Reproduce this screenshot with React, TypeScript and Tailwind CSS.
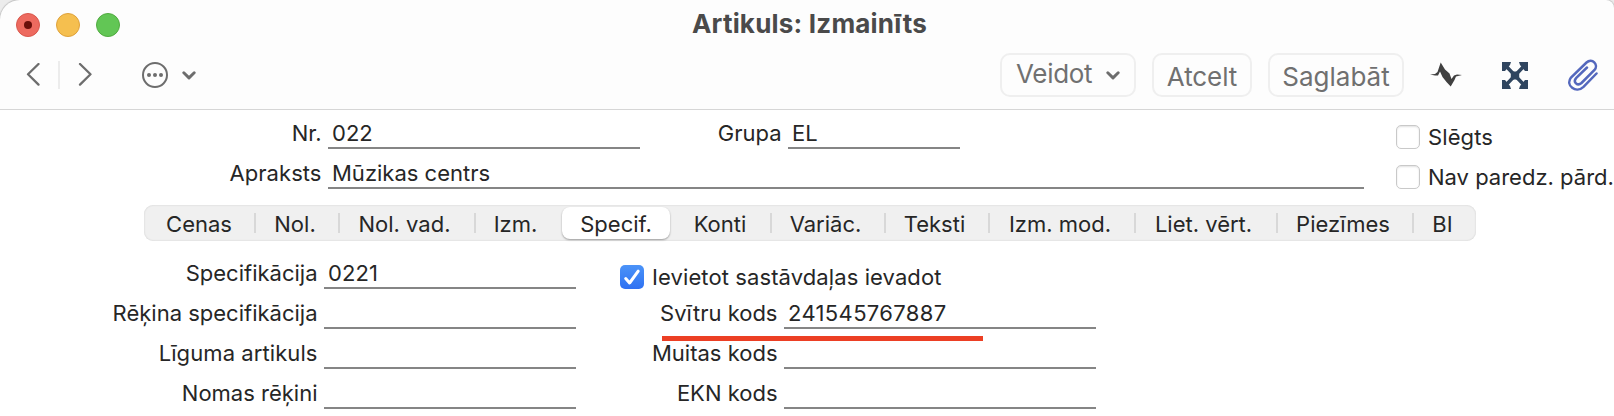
import { clsx } from 'clsx';

interface FieldProps {
  label: string;
  value?: string;
  labelClass: string;
  fieldClass: string;
  textClass?: string;
  valueClass?: string;
}

function Field({ label, value, labelClass, fieldClass, textClass, valueClass }: FieldProps) {
  return (
    <div className="flex h-10 items-end">
      <div className={clsx('shrink-0 whitespace-nowrap pr-[0.5px] pb-0.5 text-right leading-7', labelClass)}>
        <span className={textClass}>{label}</span>
      </div>
      <div className={clsx('ml-1.5 h-[30px] shrink-0 whitespace-nowrap border-b-2 border-[#858585] pl-1 leading-7', fieldClass)}>
        <span className={valueClass}>{value}</span>
      </div>
    </div>
  );
}

function Checkbox({ label, checked, textClass }: { label: string; checked?: boolean; textClass?: string }) {
  return (
    <div className="flex h-6 items-center whitespace-nowrap">
      {checked ? (
        <span className="flex size-6 shrink-0 items-center justify-center rounded-[5px] bg-linear-to-b from-[#4b93f8] to-[#2f71f2]">
          <svg viewBox="0 0 24 24" className="size-6" fill="none" stroke="white" strokeWidth="3" strokeLinecap="round" strokeLinejoin="round">
            <path d="M5.7 13.6 L9.6 18 L18.2 6.2" />
          </svg>
        </span>
      ) : (
        <span className="size-6 shrink-0 rounded-[5px] border border-[#c9c9c9] bg-white shadow-[inset_0_1px_2px_rgba(0,0,0,0.12)]" />
      )}
      <span className={clsx('ml-2 leading-7', textClass)}>{label}</span>
    </div>
  );
}

const tabs = [
  { name: 'Cenas', cell: 'w-[112px]' },
  { name: 'Nol.', cell: 'w-[84px] pr-[4px]' },
  { name: 'Nol. vad.', cell: 'w-[136px] pr-[5px]' },
  { name: 'Izm.', cell: 'w-[86px] pr-[7px]', last: true },
  { name: 'Specif.', cell: 'w-[108px]', active: true },
  { name: 'Konti', cell: 'w-[102px]' },
  { name: 'Variāc.', cell: 'w-[114px] pr-[5px]' },
  { name: 'Teksti', cell: 'w-[104px] pr-[5px]' },
  { name: 'Izm. mod.', cell: 'w-[146px] pr-[4px]' },
  { name: 'Liet. vērt.', cell: 'w-[142px] pr-[5px]' },
  { name: 'Piezīmes', cell: 'w-[136px] pr-[4px]' },
  { name: 'BI', cell: 'w-[62px] pr-[5px]', last: true },
];

function Tabs() {
  return (
    <div className="mt-4 ml-36 flex h-9 w-[1332px] items-center rounded-[9px] bg-[#f0f0f0] shadow-[inset_0_0_2px_rgba(0,0,0,0.16)]">
      {tabs.map((tab) => (
        <div
          key={tab.name}
          className={clsx(
            'flex shrink-0 items-center whitespace-nowrap',
            tab.cell,
            tab.active ? 'h-8 rounded-lg bg-white shadow-[0_1px_2px_rgba(0,0,0,0.35)]' : 'h-5',
            !tab.active && !tab.last && 'border-r-2 border-[#d8d8d8]',
          )}
        >
          <span className="mt-0.5 flex-1 text-center leading-7">{tab.name}</span>
        </div>
      ))}
    </div>
  );
}

function SmallChevron() {
  return (
    <svg width="14" height="9" viewBox="0 0 14 9" fill="none" stroke="#6d6d6d" strokeWidth="2.9" strokeLinecap="round" strokeLinejoin="round">
      <path d="M1.8 1.7 L7 6.9 L12.2 1.7" />
    </svg>
  );
}

const buttonClass = 'flex h-11 shrink-0 items-center whitespace-nowrap rounded-[10px] border-2 border-[#efefef] text-[26px] leading-8 text-[#707070]';

function Header() {
  return (
    <header className="h-[110px] rounded-tl-[20px] rounded-tr-[8px] border-b border-[#d6d6d6] bg-[#fdfdfd] shadow-[0_0_1px_1px_#c4c4c4]">
      <div className="flex h-[50px] items-center pl-4">
        <div className="flex w-[676px] gap-4">
          <span className="flex size-6 items-center justify-center rounded-full border border-[#d9574c] bg-[#ed6a5f]">
            <span className="size-2 rounded-full bg-[#6b0f0a]" />
          </span>
          <span className="size-6 rounded-full border border-[#dfa23b] bg-[#f5bf4f]" />
          <span className="size-6 rounded-full border border-[#51ab40] bg-[#62c655]" />
        </div>
        <h1 className="-mt-0.5 whitespace-nowrap text-[26px] font-bold leading-8 tracking-[0.2px] text-[#4a4a4a]">Artikuls: Izmainīts</h1>
      </div>
      <div className="flex h-[50px] items-center pl-[26px]">
        <svg width="14" height="24" viewBox="0 0 14 24" fill="none" stroke="#6d6d6d" strokeWidth="2.3" strokeLinecap="round" strokeLinejoin="round">
          <path d="M12.5 1 L2 11.3 L12.5 21.6" />
        </svg>
        <span className="ml-[18px] h-7 w-0.5 bg-[#ececec]" />
        <svg className="ml-[18px]" width="14" height="24" viewBox="0 0 14 24" fill="none" stroke="#6d6d6d" strokeWidth="2.3" strokeLinecap="round" strokeLinejoin="round">
          <path d="M2 1 L12.5 11.3 L2 21.6" />
        </svg>
        <svg className="ml-[50px]" width="26" height="26" viewBox="0 0 26 26" fill="none">
          <circle cx="13" cy="13" r="12" stroke="#6d6d6d" strokeWidth="2" />
          <circle cx="7" cy="13" r="2" fill="#6d6d6d" />
          <circle cx="13" cy="13" r="2" fill="#6d6d6d" />
          <circle cx="19" cy="13" r="2" fill="#6d6d6d" />
        </svg>
        <span className="ml-3.5">
          <SmallChevron />
        </span>
        <div className="ml-[804px] flex gap-4">
          <button className={clsx(buttonClass, 'w-[136px] pl-3.5')}>
            <span className="-mt-0.5 w-[90px] text-left tracking-[-0.3px]">Veidot</span>
            <SmallChevron />
          </button>
          <button className={clsx(buttonClass, 'w-[100px] justify-center pt-[3px] tracking-[-0.1px]')}>Atcelt</button>
          <button className={clsx(buttonClass, 'w-[136px] justify-center pt-[3px]')}>Saglabāt</button>
        </div>
        <svg className="ml-[26px] shrink-0" width="32" height="26" viewBox="0 0 32 26">
          <path d="M0 12.5 L5 12 L7.5 10 L10.7 0.5 L15 7.5 L19.5 11.5 L21.5 17 L24 13.5 L27 12.5 L32 13 L26 14.5 L24.5 18 L20.7 24.5 L16.5 20 L12.5 15 L10 9.5 L8 13.5 L5 13.6 Z" fill="#404040" />
        </svg>
        <svg className="ml-10 shrink-0" width="26" height="27" viewBox="0 0 26 27" fill="#2f455f">
          <path d="M3 3 L23 24 M23 3 L3 24" stroke="#2f455f" strokeWidth="3.5" />
          <path d="M0 0 H9 L8 3 L3 9 L0 9 Z M17 0 H26 V9 L23 9 L18 3 Z M26 18 V27 H17 L18 24 L23 18 Z M9 27 H0 V18 L3 18 L8 24 Z" />
          <rect x="8.8" y="9.5" width="8.4" height="8" rx="1.5" />
        </svg>
        <svg className="ml-10 shrink-0" width="30" height="32" viewBox="0 0 30 32" fill="none" stroke="#5468bd" strokeWidth="2.5" strokeLinecap="round">
          <path d="M28.5 14.5 L15.5 27.8 C8 35 -3 26.5 3 18.5 L18.5 3.5 C24 -1.5 31 5.5 26.5 11 L13.5 24 C9.5 27.5 4.5 23 8.3 18.8 L19 8.5" />
        </svg>
      </div>
    </header>
  );
}

export default function App() {
  return (
    <div className="h-[416px] w-[1614px] overflow-hidden bg-[#ececec] font-['Inter','Liberation_Sans',sans-serif] text-[22px] text-[#262626]">
      <Header />
      <main className="h-[306px] bg-white">
        <div className="flex">
          <div className="-mt-px w-[1396px]">
            <div className="flex">
              <Field label="Nr." value="022" labelClass="w-[322px]" fieldClass="w-[312px]" />
              <Field label="Grupa" value="EL" labelClass="w-[142px]" fieldClass="w-[172px]" />
            </div>
            <Field label="Apraksts" value="Mūzikas centrs" labelClass="w-[322px]" fieldClass="w-[1036px]" textClass="tracking-[0.05px]" />
          </div>
          <div className="flex flex-col gap-4 pt-[15px]">
            <Checkbox label="Slēgts" textClass="tracking-[0.1px]" />
            <Checkbox label="Nav paredz. pārd." />
          </div>
        </div>
        <Tabs />
        <div className="flex pt-2">
          <div className="w-[576px]">
            <Field label="Specifikācija" value="0221" labelClass="w-[318px]" fieldClass="w-[252px]" valueClass="tracking-[0.1px]" />
            <Field label="Rēķina specifikācija" labelClass="w-[318px]" fieldClass="w-[252px]" />
            <Field label="Līguma artikuls" labelClass="w-[318px]" fieldClass="w-[252px]" textClass="tracking-[0.08px]" />
            <Field label="Nomas rēķini" labelClass="w-[318px]" fieldClass="w-[252px]" />
          </div>
          <div className="relative">
            <div className="h-10 pt-4 pl-11">
              <Checkbox label="Ievietot sastāvdaļas ievadot" checked textClass="tracking-[0.1px]" />
            </div>
            <Field label="Svītru kods" value="241545767887" labelClass="w-[202px]" fieldClass="w-[312px]" valueClass="tracking-[0.35px]" />
            <Field label="Muitas kods" labelClass="w-[202px]" fieldClass="w-[312px]" />
            <Field label="EKN kods" labelClass="w-[202px]" fieldClass="w-[312px]" />
            <span className="absolute top-[87px] left-[86px] h-[5px] w-[321px] bg-[#ec3f24]" />
          </div>
        </div>
      </main>
    </div>
  );
}
